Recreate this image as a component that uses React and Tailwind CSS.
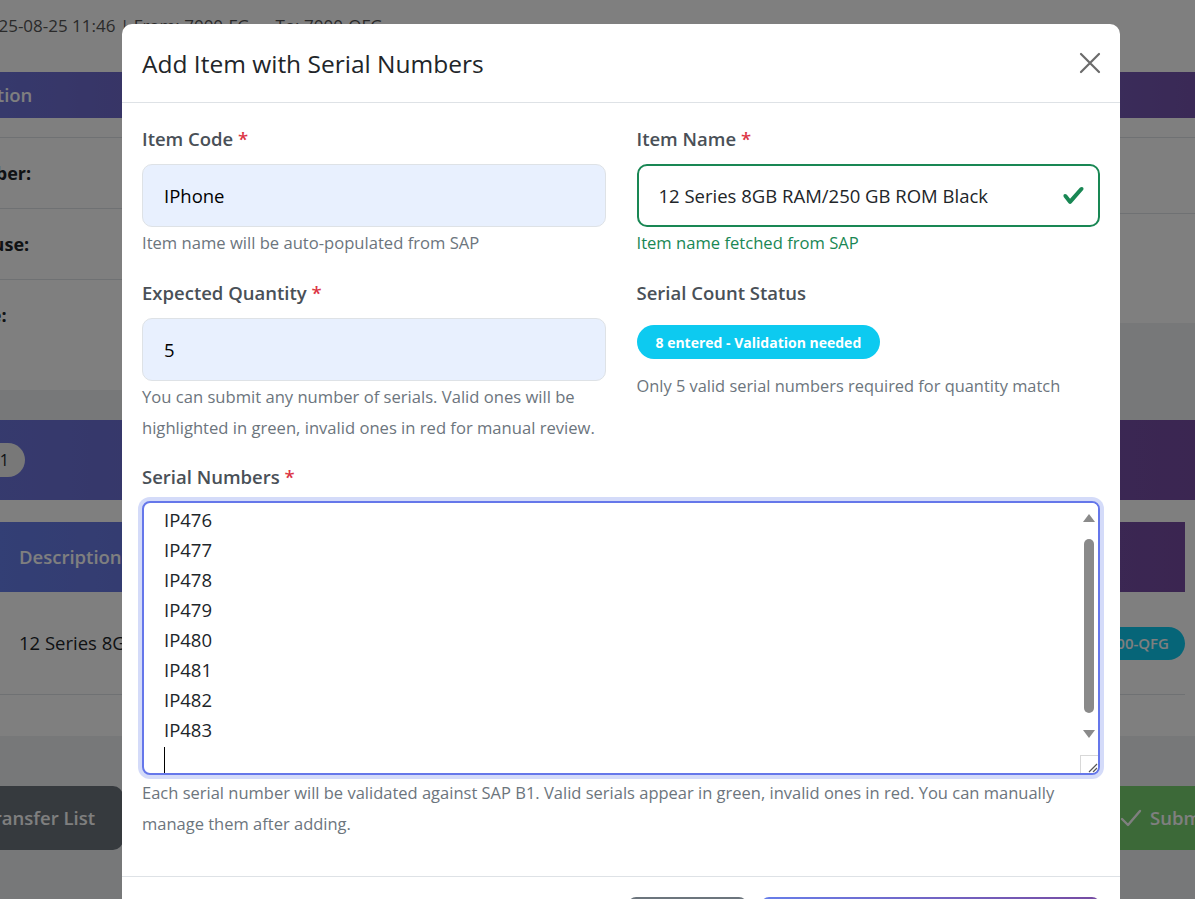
import React from "react";

function Label({ children, req }) {
  return (
    <div className="text-[18.5px] leading-[30px] font-semibold text-[#495057] mb-[10px]">
      {children}
      {req && <span className="text-[#dc3545]"> *</span>}
    </div>
  );
}

function CloseIcon() {
  return (
    <svg width="22" height="22" viewBox="0 0 22 22" className="text-[#6b6b6b]">
      <path d="M2 2L20 20M20 2L2 20" stroke="currentColor" strokeWidth="2.2" strokeLinecap="round" />
    </svg>
  );
}

function ValidIcon() {
  return (
    <svg width="23" height="23" viewBox="0 0 8 8">
      <path
        fill="#198754"
        d="M2.3 6.73.6 4.53c-.4-1.04.46-1.4 1.1-.8l1.1 1.4 3.4-3.8c.6-.63 1.6-.27 1.2.7l-4 4.6c-.43.5-.8.4-1.1.1z"
      />
    </svg>
  );
}

function Background() {
  return (
    <div className="flex flex-col bg-[#eef0f3] h-[899px] text-[#212529]">
      <div className="h-[72px] bg-white">
        <div className="-ml-[21px] pt-[11px] text-[17px] leading-[30px] text-[#555] whitespace-nowrap">
          2025-08-25 11:46 | From: 7000-FG → To: 7000-QFG
        </div>
      </div>
      <div className="flex items-start gap-[20px]">
        <div className="-ml-[175px] w-[750px] shrink-0 bg-white">
          <div className="h-[46px] bg-gradient-to-r from-[#667eea] to-[#764ba2] text-white font-semibold text-[18.5px] flex items-center pl-[20px] whitespace-nowrap">
            Transfer Information
          </div>
          <div className="pt-[19px] pb-[40px] pr-[20px]">
            <div className="h-[71px] border-t border-[#dee2e6] pl-[46px] flex items-center font-bold text-[18px] whitespace-nowrap">
              Transfer Number:
            </div>
            <div className="h-[71px] border-t border-[#dee2e6] pl-[46px] flex items-center font-bold text-[18px] whitespace-nowrap">
              From Warehouse:
            </div>
            <div className="h-[71px] border-t border-[#dee2e6] pl-[56px] flex items-center font-bold text-[18px] whitespace-nowrap">
              Request Date:
            </div>
          </div>
        </div>
        <div className="w-[700px] shrink-0 bg-white">
          <div className="h-[46px] bg-gradient-to-r from-[#667eea] to-[#764ba2]" />
          <div className="pt-[19px] pb-[34px] px-[20px]">
            <div className="h-[76px] border-t border-[#dee2e6]" />
            <div className="h-[76px] border-t border-[#dee2e6]" />
          </div>
        </div>
      </div>
      <div className="mt-[30px] -ml-[300px] w-[1520px] bg-white">
        <div className="h-[80px] bg-gradient-to-r from-[#667eea] to-[#764ba2] flex items-center pl-[235px]">
          <div className="w-[90px] h-[34px] rounded-full bg-[#f0f0f0] flex items-center justify-end pr-[16px] text-[16px] text-[#212529] whitespace-nowrap">
            Items: 1
          </div>
        </div>
        <div className="pt-[22px] pb-[41px] pl-[300px] pr-[35px]">
          <div className="h-[70px] bg-gradient-to-r from-[#667eea] to-[#764ba2] flex items-center pl-[19px] text-white font-semibold text-[18.5px]">
            Description
          </div>
          <div className="h-[103px] border-b border-[#dee2e6] flex items-center justify-between pl-[19px] pr-[0px] text-[18.5px]">
            <span className="whitespace-nowrap">12 Series 8GB RAM/250 GB ROM Black</span>
            <span className="h-[33px] px-[16px] rounded-full bg-[#0dcaf0] text-white font-semibold text-[15px] flex items-center">
              7000-QFG
            </span>
          </div>
        </div>
      </div>
      <div className="mt-[50px] flex items-center justify-between h-[64px]">
        <div className="-ml-[120px] w-[243px] h-[64px] rounded-[10px] bg-[#6c757d] text-white font-semibold text-[18.5px] flex items-center justify-end pr-[28px] whitespace-nowrap">
          ← Back to Transfer List
        </div>
        <div className="w-[260px] -mr-[165px] shrink-0 h-[64px] rounded-[10px] bg-[#78d270] text-white font-semibold text-[18.5px] flex items-center pl-[20px] gap-[8px] whitespace-nowrap">
          <svg width="22" height="22" viewBox="0 0 22 22">
            <path d="M2 12l6 6L20 4" stroke="white" strokeWidth="2.4" fill="none" strokeLinecap="round" strokeLinejoin="round" />
          </svg>
          Submit Transfer
        </div>
      </div>
    </div>
  );
}

export default function App() {
  const serials = ["IP476", "IP477", "IP478", "IP479", "IP480", "IP481", "IP482", "IP483"];
  return (
    <div className="relative w-[1195px] h-[899px] overflow-hidden font-['Segoe_UI','Open_Sans',sans-serif]">
      <Background />
      <div className="absolute inset-0 bg-black/50" />
      <div className="absolute left-[122px] top-[24px] w-[998px] bg-white rounded-[10px] text-[#212529]">
        <div className="h-[79px] border-b border-[#dee2e6] flex items-center justify-between pl-[20px] pr-[19px]">
          <div className="text-[24.5px] font-medium text-[#212529] pt-[2px]">Add Item with Serial Numbers</div>
          <CloseIcon />
        </div>
        <div className="px-[20px] pt-[21px] pb-[37px]">
          <div className="grid grid-cols-2 gap-x-[31px]">
            <div className="mb-[20px]">
              <Label req>Item Code</Label>
              <div className="h-[63px] rounded-[10px] border border-[#dee2e6] bg-[#e8f0fe] flex items-center pl-[21px] text-[18.5px] text-black">
                IPhone
              </div>
              <div className="text-[16.6px] leading-[31px] text-[#6c757d]">Item name will be auto-populated from SAP</div>
            </div>
            <div className="mb-[20px]">
              <Label req>Item Name</Label>
              <div className="h-[63px] rounded-[10px] border-2 border-[#198754] bg-white flex items-center justify-between pl-[20px] pr-[13px] text-[18.5px] text-[#212529]">
                <span>12 Series 8GB RAM/250 GB ROM Black</span>
                <ValidIcon />
              </div>
              <div className="text-[16.6px] leading-[31px] text-[#198754]">Item name fetched from SAP</div>
            </div>
            <div className="mb-[20px]">
              <Label req>Expected Quantity</Label>
              <div className="h-[63px] rounded-[10px] border border-[#dee2e6] bg-[#e8f0fe] flex items-center pl-[21px] text-[18.5px] text-black">
                5
              </div>
              <div className="text-[16.6px] leading-[31px] text-[#6c757d]">
                You can submit any number of serials. Valid ones will be
                <br />
                highlighted in green, invalid ones in red for manual review.
              </div>
            </div>
            <div className="mb-[20px]">
              <Label>Serial Count Status</Label>
              <div className="mt-[17px] flex">
                <span className="h-[34px] px-[19px] rounded-full bg-[#0dcaf0] text-white font-bold text-[14px] flex items-center">
                  8 entered - Validation needed
                </span>
              </div>
              <div className="mt-[11px] text-[16.4px] leading-[31px] text-[#6c757d]">
                Only 5 valid serial numbers required for quantity match
              </div>
            </div>
          </div>
          <div className="-mt-[1px]">
            <Label req>Serial Numbers</Label>
            <div className="-mt-[1px] h-[274px] rounded-[8px] border-2 border-[#6577ea] shadow-[0_0_0_4px_rgba(102,126,234,0.28)] flex overflow-hidden bg-white">
              <div className="flex-1 pl-[20px] pt-[2px] text-[18.5px] leading-[30px] text-[#212529]">
                {serials.map((s) => (
                  <div key={s}>{s}</div>
                ))}
                <div className="h-[30px] flex items-center">
                  <span className="w-px h-[26px] bg-black" />
                </div>
              </div>
              <div className="w-[18px] flex flex-col items-center bg-white">
                <div className="h-[30px] flex items-center justify-center">
                  <svg width="12" height="8" viewBox="0 0 12 8">
                    <path d="M6 0L12 8H0z" fill="#8a8a8a" />
                  </svg>
                </div>
                <div className="mt-[6px] w-[10px] h-[174px] rounded-full bg-[#8a8a8a]" />
                <div className="flex-1 flex items-center justify-center">
                  <svg width="12" height="8" viewBox="0 0 12 8">
                    <path d="M0 0H12L6 8z" fill="#8a8a8a" />
                  </svg>
                </div>
                <div className="w-[18px] h-[18px] border-t border-l border-[#d8d8d8] flex items-end justify-end">
                  <svg width="12" height="12" viewBox="0 0 12 12">
                    <path d="M11 3L3 11M11 7L7 11" stroke="#555" strokeWidth="1.2" />
                  </svg>
                </div>
              </div>
            </div>
            <div className="mt-[2px] text-[16.5px] leading-[31px] text-[#6c757d]">
              Each serial number will be validated against SAP B1. Valid serials appear in green, invalid ones in red. You can manually
              <br />
              manage them after adding.
            </div>
          </div>
        </div>
        <div className="border-t border-[#dee2e6] px-[20px] pt-[20px] pb-[20px] flex justify-end gap-[14px]">
          <div className="w-[119px] h-[50px] rounded-[8px] bg-[#6c757d] text-white text-[18.5px] flex items-center justify-center">
            Cancel
          </div>
          <div className="w-[339px] h-[50px] rounded-[8px] bg-gradient-to-r from-[#667eea] to-[#764ba2] text-white text-[18.5px] flex items-center justify-center">
            Add Item with Serials
          </div>
        </div>
      </div>
    </div>
  );
}
